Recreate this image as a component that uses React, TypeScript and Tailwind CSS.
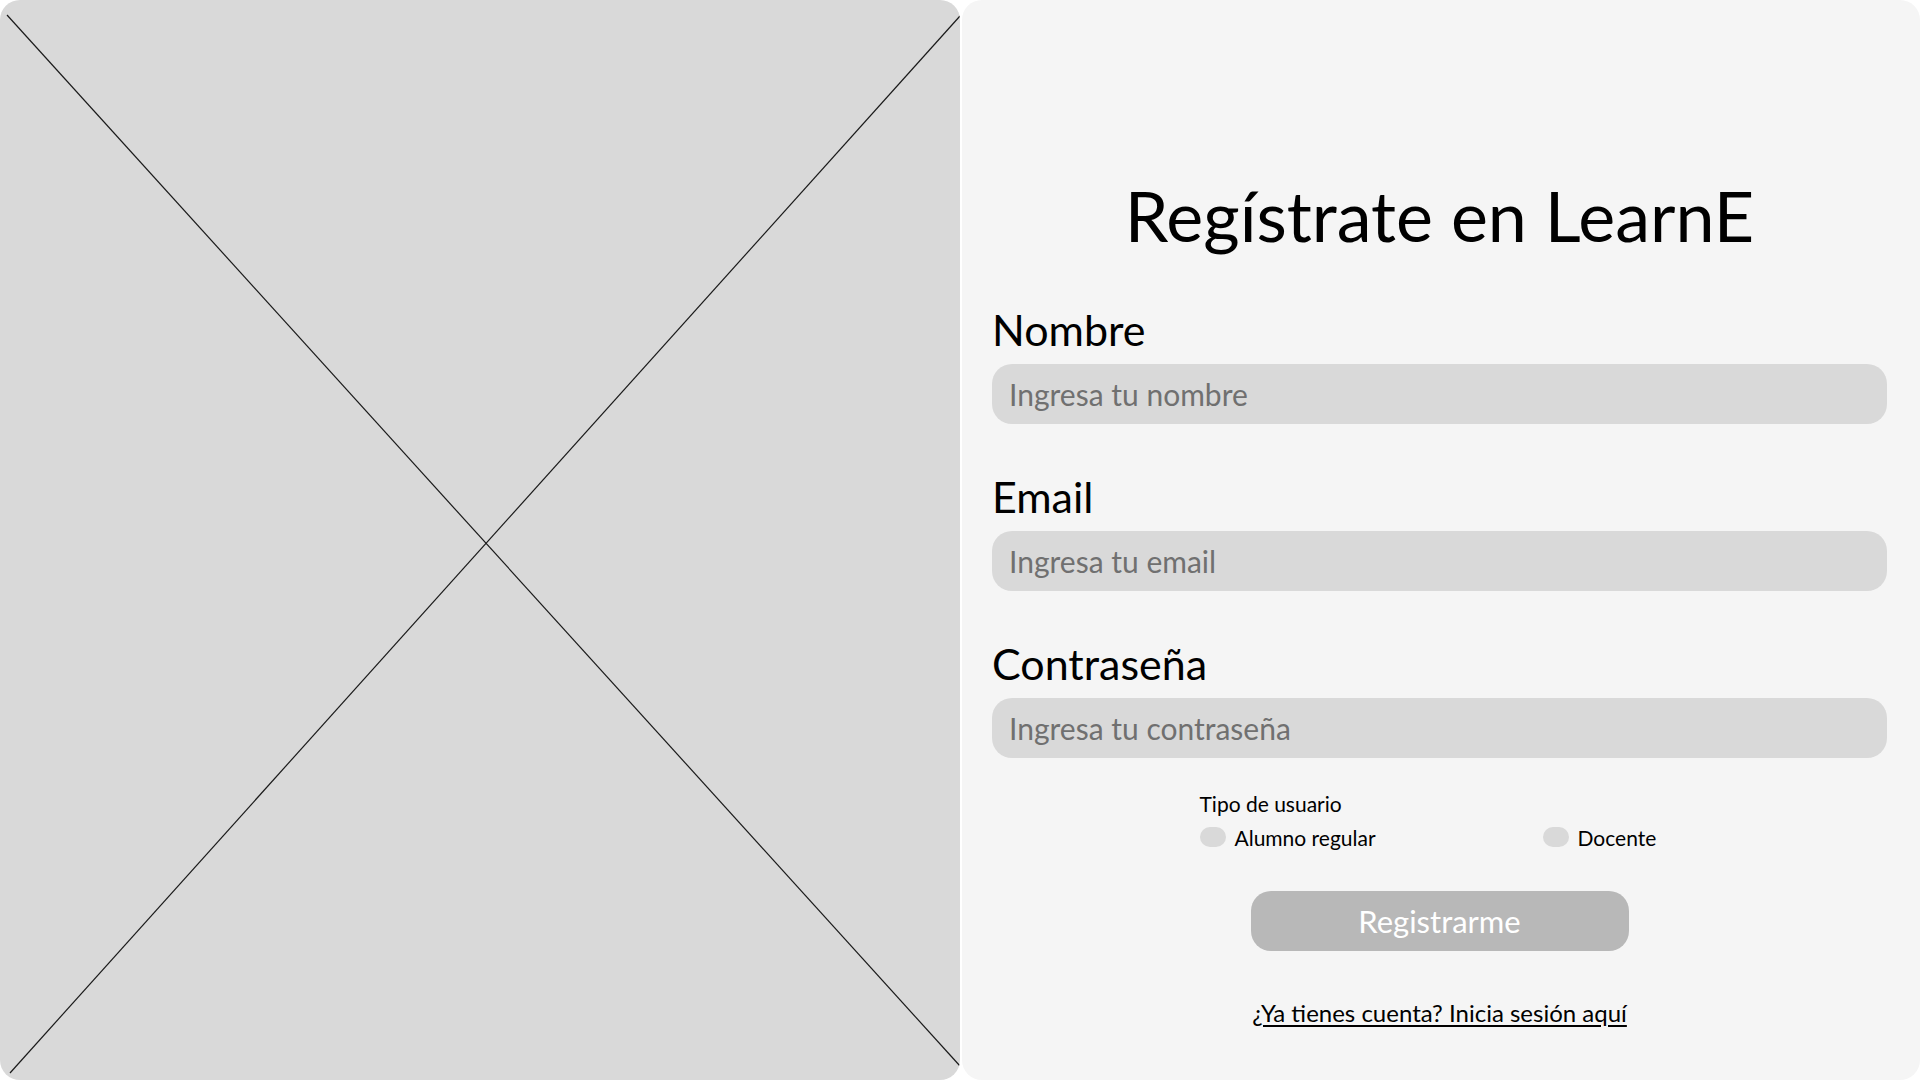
import { useState } from 'react';

const fields = [
  { id: 'nombre', label: 'Nombre', placeholder: 'Ingresa tu nombre', type: 'text' },
  { id: 'email', label: 'Email', placeholder: 'Ingresa tu email', type: 'email' },
  { id: 'password', label: 'Contraseña', placeholder: 'Ingresa tu contraseña', type: 'password' },
];

const userTypes = [
  { id: 'alumno', label: 'Alumno regular' },
  { id: 'docente', label: 'Docente' },
];

export default function App() {
  const [userType, setUserType] = useState('');

  return (
    <div
      className="flex h-screen w-full bg-white gap-[2px]"
      style={{ fontFamily: 'Lato, "Noto Sans", sans-serif' }}
    >
      {/* imagen placeholder */}
      <div className="w-[960px] h-full shrink-0 rounded-[20px] bg-[#d9d9d9] overflow-hidden">
        <svg
          className="w-full h-full"
          viewBox="0 0 960 1080"
          preserveAspectRatio="none"
        >
          <line x1="7" y1="15" x2="960" y2="1066" stroke="#1a1a1a" strokeWidth="1.2" />
          <line x1="960" y1="16" x2="10" y2="1073" stroke="#1a1a1a" strokeWidth="1.2" />
        </svg>
      </div>

      {/* formulario */}
      <div className="flex-1 h-full rounded-[20px] bg-[#f5f5f5] pl-[30px] pr-[33px] pt-[180px]">
        <h1 className="text-center text-[70px] leading-[70px] text-black">
          Regístrate en LearnE
        </h1>

        <div className="mt-[59px] flex flex-col gap-[52px]">
          {fields.map((f) => (
            <div key={f.id} className="flex flex-col gap-[14px]">
              <label htmlFor={f.id} className="text-[43px] leading-[41px] text-black">
                {f.label}
              </label>
              <input
                id={f.id}
                type={f.type}
                placeholder={f.placeholder}
                className="h-[60px] w-full rounded-[20px] bg-[#d9d9d9] px-[17px] text-[30px] text-black outline-none placeholder:text-[#707070]"
              />
            </div>
          ))}
        </div>

        <div className="w-[480px] mx-auto mt-[35px]">
          <p className="text-[21px] leading-[21px] text-black">Tipo de usuario</p>
          <div className="mt-[12px] flex h-[22px] items-center">
            {userTypes.map((t, i) => (
              <button
                key={t.id}
                type="button"
                onClick={() => setUserType(t.id)}
                className={`flex items-center gap-[9px] ${i === 0 ? 'w-[343px]' : ''}`}
              >
                <span
                  className={`h-[20px] w-[26px] rounded-full ${
                    userType === t.id ? 'bg-[#9a9a9a]' : 'bg-[#d9d9d9]'
                  }`}
                />
                <span className="text-[21px] leading-[21px] text-black">{t.label}</span>
              </button>
            ))}
          </div>
        </div>

        <div className="mt-[43px] flex justify-center">
          <button
            type="button"
            className="h-[60px] w-[378px] rounded-[20px] bg-[#b8b8b8] text-[31px] text-white"
          >
            Registrarme
          </button>
        </div>

        <div className="mt-[50px] flex justify-center">
          <a href="#" className="text-[24px] leading-[24px] text-black underline underline-offset-[3px]">
            ¿Ya tienes cuenta? Inicia sesión aquí
          </a>
        </div>
      </div>
    </div>
  );
}
